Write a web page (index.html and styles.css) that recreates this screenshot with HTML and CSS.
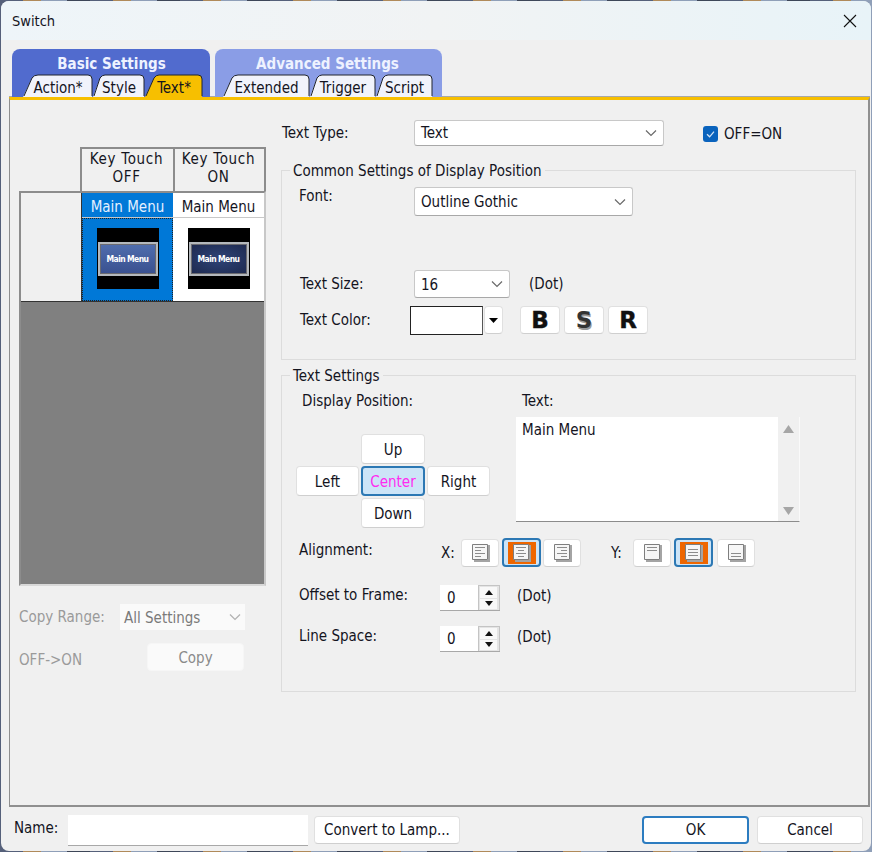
FILE: index.html
```html
<!DOCTYPE html>
<html>
<head>
<meta charset="utf-8">
<title>Switch</title>
<link rel="stylesheet" href="styles.css">
</head>
<body>
<svg class="defs" width="0" height="0">
  <symbol id="chev" viewBox="0 0 12 8"><path d="M1 1.5 L6 6.5 L11 1.5" fill="none" stroke="#6a6a6a" stroke-width="1.2"/></symbol>
  <symbol id="page" viewBox="0 0 20 20"><path d="M17 2H19V19H3V17H17Z" fill="#a4a4a4"/><path d="M1.5 1.5H16.5V16.5H1.5Z" fill="#f6f6f6" stroke="#7e7e7e"/></symbol>
</svg>
<div class="window">
  <div class="titlebar">
    <span class="title">Switch</span>
    <svg class="close" width="14" height="14" viewBox="0 0 14 14"><path d="M1 1L13 13M13 1L1 13" stroke="#111" stroke-width="1.1"/></svg>
  </div>

  <div class="tabgroups">
    <div class="tabgroup basic">
      <div class="grouphead">Basic Settings</div>
      <div class="tabs">
        <div class="tab w70"><svg width="70" height="23" viewBox="0 0 70 23"><path class="tabfill" d="M0 23L9 4Q11 1 15 1H65Q69 1 69 5V23Z"/><path class="tabline" d="M1 22L9 4Q11 1 15 1H65Q69 1 69 5V22"/></svg><span>Action*</span></div>
        <div class="tab w52"><svg width="52" height="23" viewBox="0 0 52 23"><path class="tabfill" d="M0 23L7 4Q9 1 12 1H47Q51 1 51 5V23Z"/><path class="tabline" d="M1 22L7 4Q9 1 12 1H47Q51 1 51 5V22"/></svg><span>Style</span></div>
        <div class="tab w58 active"><svg width="58" height="23" viewBox="0 0 58 23"><path class="tabfill" d="M0 23L9 4Q11 1 14 1H53Q57 1 57 5V23Z"/><path class="tabline" d="M1 22L9 4Q11 1 14 1H53Q57 1 57 5V22"/></svg><span>Text*</span></div>
      </div>
    </div>
    <div class="tabgroup advanced">
      <div class="grouphead">Advanced Settings</div>
      <div class="tabs">
        <div class="tab w87"><svg width="87" height="23" viewBox="0 0 87 23"><path class="tabfill" d="M0 23L9 4Q11 1 15 1H82Q86 1 86 5V23Z"/><path class="tabline" d="M1 22L9 4Q11 1 15 1H82Q86 1 86 5V22"/></svg><span>Extended</span></div>
        <div class="tab w66"><svg width="66" height="23" viewBox="0 0 66 23"><path class="tabfill" d="M0 23L7 4Q9 1 12 1H61Q65 1 65 5V23Z"/><path class="tabline" d="M1 22L7 4Q9 1 12 1H61Q65 1 65 5V22"/></svg><span>Trigger</span></div>
        <div class="tab w57"><svg width="57" height="23" viewBox="0 0 57 23"><path class="tabfill" d="M0 23L7 4Q9 1 12 1H52Q56 1 56 5V23Z"/><path class="tabline" d="M1 22L7 4Q9 1 12 1H52Q56 1 56 5V22"/></svg><span>Script</span></div>
      </div>
    </div>
  </div>

  <div class="panel">
    <div class="leftcol">
      <div class="keyheads">
        <div class="keyhead">Key Touch<br>OFF</div>
        <div class="keyhead">Key Touch<br>ON</div>
      </div>
      <div class="preview">
        <div class="statetable">
          <div class="rowhead"></div>
          <div class="cols">
            <div class="namerow">
              <div class="namecell selected">Main Menu</div>
              <div class="namecell">Main Menu</div>
            </div>
            <div class="thumbrow">
              <div class="thumbcell selected"><div class="thumb"><div class="thumbbtn off">Main Menu</div></div></div>
              <div class="thumbcell"><div class="thumb"><div class="thumbbtn on">Main Menu</div></div></div>
            </div>
          </div>
        </div>
      </div>
      <div class="copyrange">
        <span class="dimtext">Copy Range:</span>
        <div class="select dimselect"><span>All Settings</span><svg class="chev" width="12" height="8"><use href="#chev"/></svg></div>
      </div>
      <div class="copyrow">
        <span class="dimtext">OFF-&gt;ON</span>
        <div class="btn dimbtn">Copy</div>
      </div>
    </div>

    <div class="rightcol">
      <div class="typerow">
        <span class="typelabel">Text Type:</span>
        <div class="select typeselect"><span>Text</span><svg class="chev" width="12" height="8"><use href="#chev"/></svg></div>
        <svg class="check" width="15" height="16" viewBox="0 0 15 16"><rect width="15" height="16" rx="3" fill="#0a63bd"/><path d="M4 8.2L6.6 10.8L11 5.6" fill="none" stroke="#cfe2f5" stroke-width="1.3"/></svg>
        <span>OFF=ON</span>
      </div>

      <fieldset class="group common">
        <legend>Common Settings of Display Position</legend>
        <div class="fontrow">
          <span class="rowlabel fontlabel">Font:</span>
          <div class="select fontselect"><span>Outline Gothic</span><svg class="chev" width="12" height="8"><use href="#chev"/></svg></div>
        </div>
        <div class="sizerow">
          <span class="rowlabel">Text Size:</span>
          <div class="select sizeselect"><span>16</span><svg class="chev" width="12" height="8"><use href="#chev"/></svg></div>
          <span class="unit">(Dot)</span>
        </div>
        <div class="colorrow">
          <span class="rowlabel colorlabel">Text Color:</span>
          <div class="swatch"></div>
          <div class="btn arrowbtn"><svg width="9" height="5" viewBox="0 0 9 5"><path d="M0 0H9L4.5 5Z" fill="#000"/></svg></div>
          <div class="btn stylebtn">B</div>
          <div class="btn stylebtn shadow">S</div>
          <div class="btn stylebtn">R</div>
        </div>
      </fieldset>

      <fieldset class="group textset">
        <legend>Text Settings</legend>
        <div class="posrow">
          <div class="poscol">
            <div class="poslabel">Display Position:</div>
            <div class="pad">
              <div class="btn up">Up</div>
              <div class="btn left">Left</div>
              <div class="btn center">Center</div>
              <div class="btn right">Right</div>
              <div class="btn down">Down</div>
            </div>
          </div>
          <div class="textcol">
            <div class="textlabel">Text:</div>
            <div class="textbox">
              <div class="textval">Main Menu</div>
              <div class="scroll">
                <svg width="11" height="8" viewBox="0 0 11 8"><path d="M0 8L5.5 0L11 8Z" fill="#a6a6a6"/></svg>
                <svg width="11" height="8" viewBox="0 0 11 8"><path d="M0 0L5.5 8L11 0Z" fill="#a6a6a6"/></svg>
              </div>
            </div>
          </div>
        </div>
        <div class="alignrow">
          <span class="rowlabel alignlabel">Alignment:</span>
          <span class="axis">X:</span>
          <div class="btn alignbtn"><svg width="20" height="20"><use href="#page"/><path class="ln" d="M4 4.5H14M4 7.5H10M4 10.5H14M4 13.5H10"/></svg></div>
          <div class="btn alignbtn on"><div class="orange"><svg width="20" height="20"><use href="#page"/><path class="ln" d="M4 4.5H14M6 7.5H12M4 10.5H14M6 13.5H12"/></svg></div></div>
          <div class="btn alignbtn"><svg width="20" height="20"><use href="#page"/><path class="ln" d="M4 4.5H14M8 7.5H14M4 10.5H14M8 13.5H14"/></svg></div>
          <span class="axis yaxis">Y:</span>
          <div class="btn alignbtn"><svg width="20" height="20"><use href="#page"/><path class="ln" d="M4 4.5H14M4 7.5H14"/></svg></div>
          <div class="btn alignbtn on wide"><div class="orange"><svg width="20" height="20"><use href="#page"/><path class="ln" d="M4 6.5H14M4 9.5H14M4 12.5H14"/></svg></div></div>
          <div class="btn alignbtn"><svg width="20" height="20"><use href="#page"/><path class="ln" d="M4 10.5H14M4 13.5H14"/></svg></div>
        </div>
        <div class="spinrow first">
          <span class="rowlabel spinlabel">Offset to Frame:</span>
          <div class="spin"><span class="spinval">0</span><div class="spinbtns"><div class="spinbtn"><svg width="8" height="5" viewBox="0 0 8 5"><path d="M0 5L4 0L8 5Z" fill="#111"/></svg></div><div class="spinbtn"><svg width="8" height="5" viewBox="0 0 8 5"><path d="M0 0L4 5L8 0Z" fill="#111"/></svg></div></div></div>
          <span class="unit">(Dot)</span>
        </div>
        <div class="spinrow">
          <span class="rowlabel spinlabel">Line Space:</span>
          <div class="spin"><span class="spinval">0</span><div class="spinbtns"><div class="spinbtn"><svg width="8" height="5" viewBox="0 0 8 5"><path d="M0 5L4 0L8 5Z" fill="#111"/></svg></div><div class="spinbtn"><svg width="8" height="5" viewBox="0 0 8 5"><path d="M0 0L4 5L8 0Z" fill="#111"/></svg></div></div></div>
          <span class="unit">(Dot)</span>
        </div>
      </fieldset>
    </div>
  </div>

  <div class="footer">
    <span class="namelabel">Name:</span>
    <div class="nameinput"></div>
    <div class="btn convert">Convert to Lamp...</div>
    <div class="btn ok">OK</div>
    <div class="btn cancel">Cancel</div>
  </div>
</div>
</body>
</html>
```

FILE: styles.css
```css
* {
 box-sizing: border-box;
}

html, body {
 margin: 0;
 height: 100%;
 overflow: hidden;
}

body {
 background: repeating-linear-gradient(90deg, #55607a 0, #55607a 23px, #b08a5a 23px, #b08a5a 41px, #8f9fb8 41px, #8f9fb8 67px, #3d4658 67px, #3d4658 90px);
 font-family: "DejaVu Sans", sans-serif;
 font-stretch: condensed;
 font-size: 15px;
 color: #14141e;
}

.defs {
 display: block;
 height: 0;
}

.window {
 margin: 1px 0 0 1px;
 width: 870px;
 height: 850px;
 background: #f0f0f0;
 border-radius: 8px;
 overflow: hidden;
}

/* title */
.titlebar {
 height: 39px;
 display: flex;
 align-items: center;
 justify-content: space-between;
 padding: 0 14px 0 11px;
 background: linear-gradient(90deg, #eef5f9, #f1f3f4 50%, #e8f3f8);
}

.title {
 font-size: 14.5px;
}

/* tabs */
.tabgroups {
 display: flex;
 gap: 5px;
 margin: 9px 0 0 11px;
 height: 48px;
}

.tabgroup {
 padding-left: 11px;
 border-radius: 8px 8px 0 0;
}

.basic {
 width: 198px;
 background: #516bce;
}

.advanced {
 width: 227px;
 padding-left: 8px;
 background: #8a9de6;
}

.grouphead {
 height: 25px;
 line-height: 30px;
 padding-right: 10px;
 text-align: center;
 font-weight: bold;
 font-size: 15px;
 color: #eef2ff;
}

.tabs {
 display: flex;
}

.tab {
 position: relative;
 height: 23px;
 line-height: 28px;
 text-align: center;
}

.tab svg {
 position: absolute;
 left: 0;
 top: 0;
}

.tab span {
 position: relative;
}

.w70 { width: 70px; }
.w52 { width: 52px; }
.w58 { width: 58px; }
.w87 { width: 87px; }
.w66 { width: 66px; }
.w57 { width: 57px; }

.tabfill {
 fill: #f1f3fb;
}

.tabline {
 fill: none;
 stroke: #20242e;
 stroke-width: 1;
}

.active .tabfill {
 fill: #f7bf00;
}

.panel {
 display: flex;
 margin-left: 8px;
 width: 861px;
 height: 710px;
 background: #f0f0f0;
 border: 1px solid #8f8f8f;
 border-top: 3px solid #f7bf00;
 border-right-width: 2px;
 border-bottom-width: 2px;
 box-shadow: 0 -1px 0 #a8a8a8;
}

/* left side */
.leftcol {
 width: 271px;
 padding: 47px 0 0 9px;
}

.keyheads {
 display: flex;
 margin-left: 61px;
 height: 44px;
}

.keyhead {
 width: 93px;
 border: 2px solid #8c8c8c;
 border-bottom: 0;
 border-right: 0;
 text-align: center;
 line-height: 18px;
 padding: 1px 2px 0 0;
 letter-spacing: 0.7px;
}

.keyhead + .keyhead {
 border-right: 2px solid #8c8c8c;
}

.preview {
 width: 247px;
 height: 395px;
 background: #808080;
 border: 2px solid #8c8c8c;
 border-bottom-color: #d8d8d8;
 border-right-color: #c8c8c8;
}

.statetable {
 display: flex;
 height: 109px;
 background: #fff;
 border-bottom: 1px solid #333;
}

.rowhead {
 width: 61px;
 background: #f0f0f0;
 border-right: 1px solid #333;
}

.cols {
 flex: 1;
}

.namerow {
 display: flex;
 height: 25px;
 border-bottom: 1px solid #c8c8c8;
}

.namecell {
 width: 91px;
 line-height: 28px;
 text-align: center;
 background: #fff;
}

.namecell.selected {
 background: #0078d7;
 color: #e4f0ff;
}

.thumbrow {
 display: flex;
 height: 83px;
}

.thumbcell {
 width: 91px;
 display: flex;
 align-items: center;
 justify-content: center;
 padding-bottom: 2px;
}

.thumbcell.selected {
 background: #0078d7;
 border: 1px dotted #222;
}

.thumb {
 width: 62px;
 height: 61px;
 display: flex;
 align-items: center;
 background: #000;
}

.thumbbtn {
 width: 60px;
 height: 34px;
 margin: 0 auto;
 border: 3px solid #b4b8bc;
 outline: 1px solid #6a6a70;
 outline-offset: -3px;
 line-height: 28px;
 text-align: center;
 font-size: 8.5px;
 font-weight: bold;
 letter-spacing: -0.6px;
 color: #fff;
 white-space: nowrap;
}

.thumbbtn.off {
 background: linear-gradient(#4f6dad, #3a5190);
}

.thumbbtn.on {
 background: radial-gradient(ellipse at center, #2f4478, #1e2a50);
}

.copyrange {
 display: flex;
 align-items: center;
 justify-content: space-between;
 width: 226px;
 margin-top: 18px;
}

.dimtext {
 color: #9a9a9a;
}

.copyrange .dimselect {
 width: 125px;
 height: 26px;
 border: 0;
 border-radius: 0;
 padding: 0 4px 0 4px;
 background: #fafafa;
 color: #7a7a7a;
}

.dimselect .chev {
 opacity: 0.5;
}

.copyrow {
 display: flex;
 align-items: center;
 justify-content: space-between;
 width: 225px;
 margin-top: 13px;
 height: 28px;
}

.copyrow .dimtext {
 margin-top: 5px;
}

.copyrow .dimbtn {
 width: 97px;
 height: 28px;
 padding-top: 2px;
 border-color: #f6f6f6;
 background: #fafafa;
 color: #8a8a8a;
}

/* shared controls */
.btn {
 display: flex;
 align-items: center;
 justify-content: center;
 background: #fff;
 border: 1px solid #e0e0e0;
 border-bottom-color: #cfcfcf;
 border-radius: 4px;
}

.select {
 display: flex;
 align-items: center;
 justify-content: space-between;
 padding: 0 6px;
 background: #fff;
 border: 1px solid #c8c8c8;
 border-bottom-color: #a8a8a8;
 border-radius: 3px;
}

.select span {
 padding-top: 1px;
}

.unit {
 margin-left: 17px;
}

.rowlabel {
 display: block;
}

/* right side */
.rightcol {
 width: 575px;
 padding-top: 20px;
}

.typerow {
 display: flex;
 align-items: center;
 height: 25px;
}

.typelabel {
 width: 133px;
 padding-left: 1px;
}

.typeselect {
 width: 250px;
 height: 26px;
}

.check {
 margin: 2px 6px 0 39px;
}

.typerow > span:last-child {
 margin-top: 3px;
}

.group {
 margin: 15px 0 0;
 padding: 0 0 0 14px;
 border: 1px solid #dcdcdc;
 min-width: 0;
}

.group legend {
 margin-left: -6px;
 padding: 0 3px;
 line-height: 22px;
 height: 20px;
}

.common {
 height: 200px;
}

.textset {
 margin-top: 5px;
 height: 327px;
}

.fontrow {
 display: flex;
 height: 28px;
 margin: 7px 0 0 3px;
}

.fontlabel {
 width: 115px;
 line-height: 18px;
}

.fontselect {
 width: 219px;
 height: 29px;
}

.sizerow {
 display: flex;
 align-items: center;
 height: 28px;
 margin: 55px 0 0 4px;
}

.sizerow .rowlabel {
 width: 114px;
}

.sizeselect {
 width: 96px;
 height: 28px;
}

.sizerow .unit {
 margin-left: 19px;
}

.colorrow {
 display: flex;
 align-items: center;
 height: 30px;
 margin: 7px 0 0 4px;
}

.colorlabel {
 width: 110px;
}

.swatch {
 width: 73px;
 height: 29px;
 background: #fff;
 border: 1px solid #222;
 border-right-color: #555;
}

.arrowbtn {
 width: 19px;
 height: 28px;
 margin: 0 17px 0 1px;
}

.stylebtn {
 width: 40px;
 height: 28px;
 margin-right: 4px;
 font-stretch: normal;
 font-size: 23px;
 font-weight: bold;
 -webkit-text-stroke: 0.4px #111;
 color: #111;
}

.stylebtn.shadow {
 -webkit-text-stroke: 0;
 text-shadow: 1px 2px 0 #999;
 color: #333;
}

.posrow {
 display: flex;
 height: 143px;
}

.poscol {
 width: 220px;
}

.poslabel {
 height: 39px;
 padding: 7px 0 0 6px;
}

.pad {
 display: grid;
 grid-template-columns: 63px 64px 63px;
 grid-template-rows: 30px 30px 30px;
 gap: 2px;
 margin-top: 10px;
}

.pad .btn {
 padding-top: 2px;
}

.up { grid-column: 2; grid-row: 1; }
.left { grid-column: 1; grid-row: 2; }
.center { grid-column: 2; grid-row: 2; }
.right { grid-column: 3; grid-row: 2; }
.down { grid-column: 2; grid-row: 3; }

.pad .center {
 background: #cce4f7;
 border: 2px solid #2c78b4;
 color: #ff2bf0;
}

.textlabel {
 height: 32px;
 padding: 7px 0 0 6px;
}

.textbox {
 display: flex;
 justify-content: space-between;
 width: 284px;
 height: 105px;
 background: #fff;
 border-right: 1px solid #fafafa;
 border-bottom: 1px solid #8c8c8c;
}

.textval {
 padding: 4px 0 0 6px;
}

.scroll {
 display: flex;
 flex-direction: column;
 justify-content: space-between;
 width: 21px;
 padding: 8px 0 6px 5px;
 background: #f0f0f0;
}

.alignrow {
 display: flex;
 align-items: center;
 height: 29px;
 margin: 10px 0 0 3px;
}

.alignlabel {
 width: 142px;
 margin-top: -5px;
}

.axis {
 width: 20px;
}

.yaxis {
 margin-left: 27px;
 width: 22px;
}

.alignbtn {
 width: 38px;
 height: 28px;
 margin-right: 3px;
}

.alignbtn svg {
 margin-left: 1px;
}

.alignbtn.on {
 width: 39px;
 height: 29px;
 margin-right: 2px;
 background: #cce4f7;
 border: 2px solid #2c78b4;
}

.alignbtn.wide {
 margin-right: 4px;
}

.orange {
 display: flex;
 align-items: center;
 justify-content: center;
 width: 28px;
 height: 22px;
 background: #ee6600;
}

.ln {
 fill: none;
 stroke: #8c8c8c;
 stroke-width: 1;
}

.spinrow {
 display: flex;
 align-items: center;
 height: 26px;
 margin: 15px 0 0 3px;
}

.spinrow.first {
 margin-top: 18px;
}

.spinlabel {
 width: 141px;
 margin-top: -6px;
}

.spinrow .unit {
 margin-top: -5px;
}

.spin {
 display: flex;
 width: 60px;
 height: 26px;
 background: #fff;
 border-bottom: 1px solid #a8a8a8;
}

.spinval {
 flex: 1;
 padding-left: 7px;
 line-height: 27px;
}

.spinbtns {
 display: flex;
 flex-direction: column;
 gap: 1px;
 width: 22px;
 padding: 1px 2px 1px 1px;
 background: #e4e4e4;
 border: 1px solid #c4c4c4;
 border-bottom: 0;
}

.spinbtn {
 flex: 1;
 display: flex;
 align-items: center;
 justify-content: center;
 background: #f8f8f8;
}

/* bottom row */
.footer {
 display: flex;
 align-items: center;
 height: 38px;
 padding: 8px 0 0 13px;
}

.namelabel {
 width: 54px;
 margin-top: -4px;
}

.nameinput {
 width: 240px;
 height: 31px;
 background: #fff;
 border-bottom: 1px solid #a8a8a8;
}

.footer .btn {
 height: 28px;
}

.convert {
 width: 146px;
 margin-left: 6px;
}

.footer .ok {
 width: 107px;
 margin-left: 182px;
 border: 2px solid #2c7cc0;
}

.cancel {
 width: 106px;
 margin-left: 8px;
}
```
